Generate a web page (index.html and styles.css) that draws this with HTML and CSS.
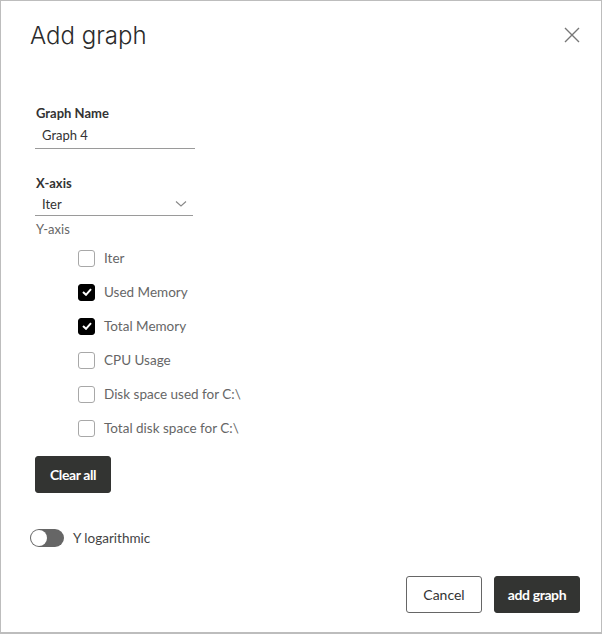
FILE: index.html
```html
<!DOCTYPE html>
<html>
<head>
<meta charset="utf-8">
<link rel="stylesheet" href="styles.css">
</head>
<body>
<div class="dialog">
  <div class="header">
    <h1 class="title">Add graph</h1>
    <button class="close" aria-label="Close">
      <svg width="16" height="16" viewBox="0 0 16 16"><path d="M1 1L15 15M15 1L1 15" stroke="#777" stroke-width="1.4" fill="none"/></svg>
    </button>
  </div>
  <div class="body">
    <div class="field name-field">
      <label class="label">Graph Name</label>
      <div class="input">Graph 4</div>
    </div>
    <div class="field x-field">
      <label class="label">X-axis</label>
      <div class="select">
        <span>Iter</span>
        <svg width="12" height="8" viewBox="0 0 12 8"><path d="M1 1.5L6 6L11 1.5" stroke="#888" stroke-width="1.1" fill="none"/></svg>
      </div>
    </div>
    <div class="y-label">Y-axis</div>
    <ul class="checks">
      <li class="check"><span class="box"></span>Iter</li>
      <li class="check"><span class="box on"><svg width="10" height="8" viewBox="0 0 10 8"><path d="M1 4L4 6.8L9 1.2" stroke="#fff" stroke-width="2" fill="none"/></svg></span>Used Memory</li>
      <li class="check"><span class="box on"><svg width="10" height="8" viewBox="0 0 10 8"><path d="M1 4L4 6.8L9 1.2" stroke="#fff" stroke-width="2" fill="none"/></svg></span>Total Memory</li>
      <li class="check"><span class="box"></span>CPU Usage</li>
      <li class="check"><span class="box"></span>Disk space used for C:\</li>
      <li class="check"><span class="box"></span>Total disk space for C:\</li>
    </ul>
    <button class="btn dark clear">Clear all</button>
    <div class="toggle-row">
      <span class="toggle"><span class="knob"></span></span>
      <span class="toggle-label">Y logarithmic</span>
    </div>
  </div>
  <div class="footer">
    <button class="btn outline">Cancel</button>
    <button class="btn dark add">add graph</button>
  </div>
</div>
</body>
</html>
```
FILE: styles.css
```css
* { box-sizing: border-box; }
html, body { margin: 0; padding: 0; }
body {
  width: 602px;
  height: 634px;
  font-family: Lato, "Source Sans Pro", "Noto Sans", sans-serif;
  color: #333;
  background: #fff;
}
.dialog {
  width: 602px;
  height: 634px;
  border: 1px solid #bdbdbd;
  border-bottom-width: 2px;
  display: flex;
  flex-direction: column;
  position: relative;
}
.header {
  display: flex;
  justify-content: space-between;
  align-items: center;
  padding: 18px 21px 0 29px;
  height: 50px;
}
.title {
  margin: 0;
  font-family: Inter, sans-serif;
  font-weight: 300;
  font-size: 24px;
  letter-spacing: 0;
  color: #2b2b2b;
}
.close {
  background: none;
  border: none;
  padding: 0;
  width: 16px;
  height: 16px;
  display: flex;
}
.body {
  padding: 53px 0 0 34px;
  flex: 1;
  display: flex;
  flex-direction: column;
  align-items: flex-start;
}
.field { display: flex; flex-direction: column; }
.label {
  font-weight: 700;
  font-size: 13px;
  color: #333;
  line-height: 18px;
  padding-left: 1px;
}
.input {
  width: 160px;
  border-bottom: 1px solid #9a9a9a;
  padding: 5px 0 5px 7px;
  font-size: 13px;
  line-height: 16px;
}
.x-field { margin-top: 25px; }
.select {
  width: 158px;
  border-bottom: 1px solid #9a9a9a;
  padding: 4px 6px 3px 7px;
  font-size: 13px;
  line-height: 16px;
  display: flex;
  justify-content: space-between;
  align-items: center;
}
.y-label {
  margin-top: 5px;
  font-size: 13px;
  color: #666;
  line-height: 16px;
  padding-left: 1px;
}
.checks {
  list-style: none;
  margin: 12px 0 0 0;
  padding: 0 0 0 43px;
  display: flex;
  flex-direction: column;
  gap: 16px;
}
.check {
  display: flex;
  align-items: center;
  height: 18px;
  font-size: 13.5px;
  color: #666;
}
.box {
  width: 17px;
  height: 17px;
  border: 1px solid #a8a8a8;
  border-radius: 3px;
  margin-right: 9px;
  display: flex;
  align-items: center;
  justify-content: center;
}
.box.on { background: #000; border-color: #000; }
.btn {
  font-family: Lato, "Source Sans Pro", sans-serif;
  font-size: 14px;
  height: 37px;
  border-radius: 3px;
  padding: 0;
  cursor: pointer;
}
.dark {
  background: #333432;
  color: #fff;
  border: 1px solid #333432;
  font-weight: 700;
  letter-spacing: -0.4px;
}
.clear { width: 76px; margin-top: 19px; }
.toggle-row {
  display: flex;
  align-items: center;
  margin-top: 36px;
  margin-left: -5px;
}
.toggle {
  width: 34px;
  height: 18px;
  border-radius: 9px;
  background: #666;
  position: relative;
  display: inline-block;
}
.knob {
  position: absolute;
  left: 1px;
  top: 1px;
  width: 16px;
  height: 16px;
  border-radius: 50%;
  background: #fff;
}
.toggle-label {
  margin-left: 9px;
  font-size: 13.5px;
  color: #444;
}
.footer {
  display: flex;
  justify-content: flex-end;
  gap: 12px;
  padding: 0 21px 19px 0;
}
.outline {
  width: 76px;
  background: #fff;
  color: #333;
  border: 1px solid #666;
  font-weight: 400;
}
.add { width: 86px; }
```
